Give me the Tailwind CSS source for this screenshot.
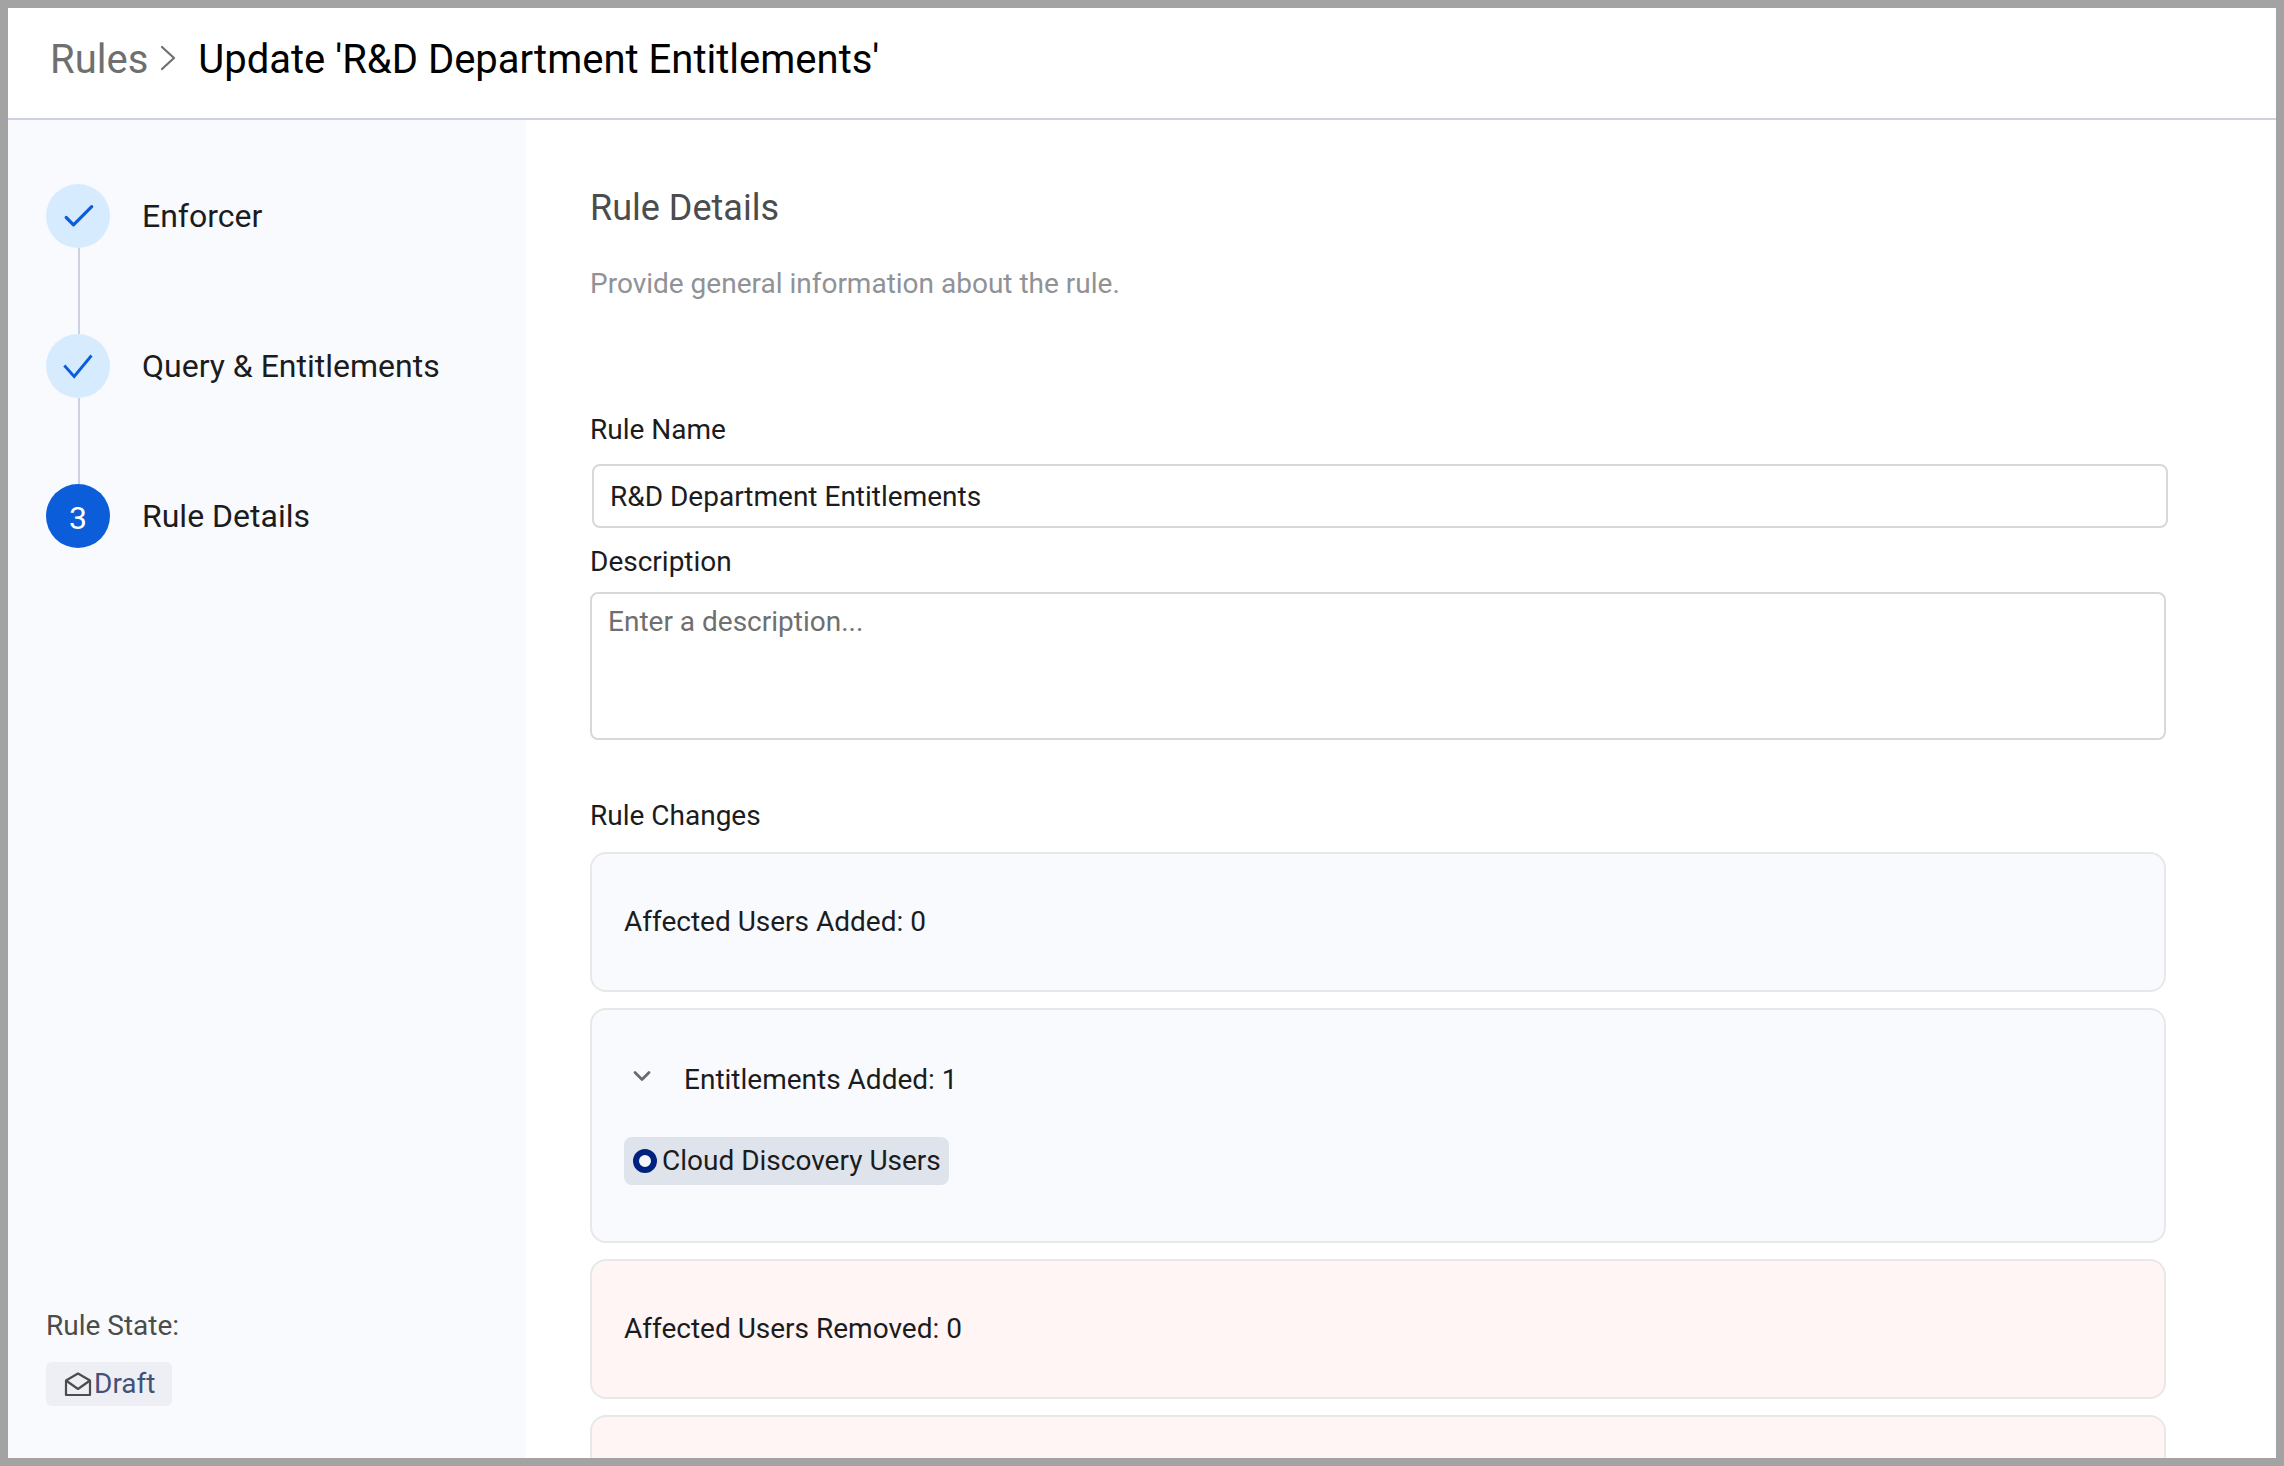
<!DOCTYPE html>
<html lang="en">
<head>
<meta charset="utf-8">
<title>Update rule</title>
<script src="https://cdn.jsdelivr.net/npm/@tailwindcss/browser@4"></script>
</head>
<body class="font-['Roboto',sans-serif]">
<div class="flex h-[1466px] w-[2284px] flex-col overflow-hidden border-8 border-[#a3a3a3] bg-white text-[28px] leading-8 text-[#1b1c1e]">
  <header class="flex h-28 shrink-0 items-start border-b-2 border-[#cfd1e3] pt-7 pl-[42px] text-[40px] leading-12">
    <a class="text-[#6f6f6f]">Rules</a>
    <svg class="mt-2 ml-[11px] h-[28px] w-[18px]" viewBox="0 0 18 28" fill="none" stroke="#6f6f6f" stroke-width="2.2" stroke-linecap="round" stroke-linejoin="round"><path d="M3 3 15 14 3 25"/></svg>
    <h1 class="ml-[21px] text-black">Update 'R&amp;D Department Entitlements'</h1>
  </header>
  <div class="flex min-h-0 flex-1">
    <aside class="flex w-[518px] shrink-0 flex-col justify-between bg-[#f9fafe] pt-16 pb-[52px] pl-[38px]">
      <ol class="flex flex-col text-[32px]">
        <li class="flex gap-8">
          <div class="flex w-16 flex-col items-center">
            <span class="flex size-16 items-center justify-center rounded-full bg-[#d7ebff]"><svg class="size-8" viewBox="0 0 32 32" fill="none" stroke="#0b5dda" stroke-width="3.2" stroke-linecap="round" stroke-linejoin="round"><path d="M4.200 17.500 11.500 24.800 29.700 6.700"/></svg></span>
            <span class="ml-0.5 h-[86px] w-0.5 bg-[#cfd1e3]"></span>
          </div>
          <span class="leading-16">Enforcer</span>
        </li>
        <li class="flex gap-8">
          <div class="flex w-16 flex-col items-center">
            <span class="flex size-16 items-center justify-center rounded-full bg-[#d7ebff]"><svg class="size-8" viewBox="0 0 32 32" fill="none" stroke="#0b5dda" stroke-width="2.800"><path d="M2.300 15.500 12.200 26.500 29.500 5.500"/></svg></span>
            <span class="ml-0.5 h-[86px] w-0.5 bg-[#cfd1e3]"></span>
          </div>
          <span class="leading-16">Query &amp; Entitlements</span>
        </li>
        <li class="flex gap-8">
          <span class="flex size-16 items-center justify-center rounded-full bg-[#0b5dda] pt-1 text-white">3</span>
          <span class="leading-16">Rule Details</span>
        </li>
      </ol>
      <div class="flex flex-col items-start gap-5 text-[#4b4c4e]">
        <p>Rule State:</p>
        <span class="flex h-11 w-[126px] items-center rounded-md bg-[#eeeff5] pl-[18px] text-[#435277]">
          <svg class="mt-0.5 mr-0.5 h-7 w-7" viewBox="0 0 28 28" fill="none" stroke="#4b4c4e" stroke-width="2.2" stroke-linejoin="round"><path d="M2 9.500 14 2.500 26 9.500V24H2ZM2 9.500 14 18 26 9.500"/></svg>Draft
        </span>
      </div>
    </aside>
    <main class="flex-1 pt-[66px] pl-16">
      <h2 class="text-[36px] leading-[44px] text-[#4b4c4e]">Rule Details</h2>
      <p class="mt-[38px] text-[#909296]">Provide general information about the rule.</p>
      <label class="mt-[114px] block">Rule Name</label>
      <div class="mt-[18px] ml-0.5 h-16 w-[1576px] rounded-lg border-2 border-[#d8d8d8] pt-[15px] pl-4">R&amp;D Department Entitlements</div>
      <label class="mt-[18px] block">Description</label>
      <div class="mt-3.5 h-[148px] w-[1576px] rounded-lg border-2 border-[#d8d8d8] pt-3 pl-4 text-[#6f6f6f]">Enter a description...</div>
      <h3 class="mt-[60px]">Rule Changes</h3>
      <div class="mt-5 flex w-[1576px] flex-col gap-4">
        <section class="h-[140px] shrink-0 rounded-2xl border-2 border-[#e8e8e8] bg-[#f9fafe] pt-[52px] pl-8">Affected Users Added: 0</section>
        <section class="flex h-[235px] shrink-0 flex-col items-start rounded-2xl border-2 border-[#e8e8e8] bg-[#f9fafe] pt-[54px] pl-8">
          <div class="flex">
            <svg class="mr-6 h-7 w-9" viewBox="0 0 36 28" fill="none" stroke="#6a6a6a" stroke-width="2.800" stroke-linecap="round" stroke-linejoin="round"><path d="M11 8.500 18 15.500 25 8.500"/></svg>
            <span>Entitlements Added: 1</span>
          </div>
          <span class="mt-[41px] flex h-12 w-[325px] items-center rounded-lg bg-[#dfe3ec] pl-[9px]"><span class="mr-[5px] size-6 rounded-full border-6 border-[#00217d] bg-[#f4f6fa]"></span>Cloud Discovery Users</span>
        </section>
        <section class="h-[140px] shrink-0 rounded-2xl border-2 border-[#e8e8e8] bg-[#fff5f4] pt-[52px] pl-8">Affected Users Removed: 0</section>
        <section class="h-[140px] shrink-0 rounded-2xl border-2 border-[#e8e8e8] bg-[#fff5f4]"></section>
      </div>
    </main>
  </div>
</div>
</body>
</html>
